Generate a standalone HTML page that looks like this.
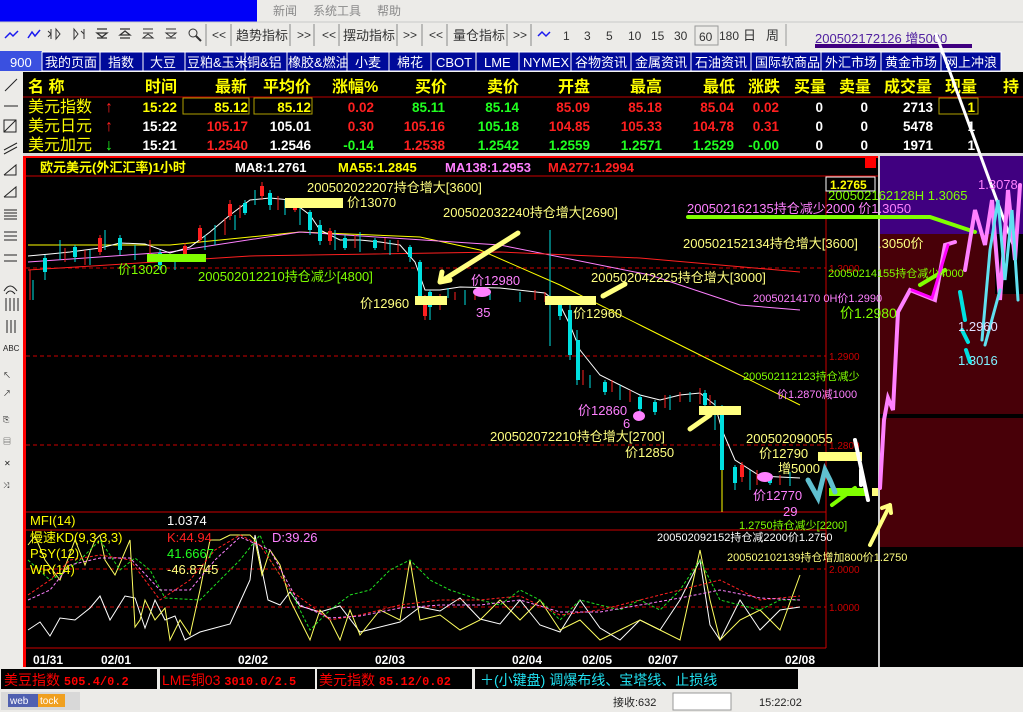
<!DOCTYPE html>
<html><head><meta charset="utf-8"><style>
*{margin:0;padding:0}
body{width:1023px;height:712px;overflow:hidden;background:#ecebe8;font-family:"Liberation Sans","Noto Sans CJK SC",sans-serif}
svg{position:absolute;left:0;top:0}
</style></head><body>
<svg width="1023" height="712" viewBox="0 0 1023 712" font-family="Liberation Sans, Noto Sans CJK SC, sans-serif">
<rect x="0" y="0" width="1023" height="22" fill="#ecebe8"/>
<rect x="0" y="0" width="257" height="22" fill="#0000f8"/>
<g fill="#8a8a8a" font-size="12"><text x="273" y="15">新闻</text><text x="313" y="15">系统工具</text><text x="377" y="15">帮助</text></g>
<line x1="0" y1="22" x2="1023" y2="22" stroke="#c8c8c8"/>
<rect x="0" y="23" width="1023" height="25" fill="#ecebe8"/>
<g stroke="#888" fill="none"><line x1="206" y1="24" x2="206" y2="46"/><line x1="231" y1="24" x2="231" y2="46"/><line x1="290" y1="24" x2="290" y2="46"/><line x1="314" y1="24" x2="314" y2="46"/><line x1="339" y1="24" x2="339" y2="46"/><line x1="397" y1="24" x2="397" y2="46"/><line x1="422" y1="24" x2="422" y2="46"/><line x1="447" y1="24" x2="447" y2="46"/><line x1="507" y1="24" x2="507" y2="46"/><line x1="531" y1="24" x2="531" y2="46"/></g>
<g stroke="#1a1af0" stroke-width="1.5" fill="none"><polyline points="5,38 10,33 13,36 18,31"/><polyline points="28,38 32,32 35,36 40,30"/><polyline points="538,36 542,32 546,36 550,32"/></g>
<g stroke="#333" fill="none"><path d="M51,29V39M51,34l-3,-3M51,34l-3,3M56,29l4,5l-4,5z"/><path d="M74,29l4,5l-4,5zM84,29V39M84,34l-3,-3"/><path d="M97,29h10M97,33h10l-5,4z M97,38h10" stroke-width="1.3"/><path d="M120,29h10M125,31l-5,4h10z M120,38h10" stroke-width="1.3"/><path d="M143,29h10M143,33h10M148,34l-5,4h10z"/><path d="M166,29h10M166,33h10l-5,4zM166,38h10"/><circle cx="193" cy="33" r="4"/><path d="M196,36l5,5" stroke-width="2"/></g>
<g fill="#333" font-size="12">
<text x="212" y="39">&lt;&lt;</text><text x="236" y="40" font-size="13">趋势指标</text><text x="297" y="39">&gt;&gt;</text><text x="322" y="39">&lt;&lt;</text><text x="343" y="40" font-size="13">摆动指标</text><text x="403" y="39">&gt;&gt;</text><text x="429" y="39">&lt;&lt;</text><text x="453" y="40" font-size="13">量仓指标</text><text x="513" y="39">&gt;&gt;</text>
<text x="563" y="40">1</text><text x="584" y="40">3</text><text x="606" y="40">5</text><text x="628" y="40">10</text><text x="651" y="40">15</text><text x="674" y="40">30</text><text x="699" y="41">60</text><text x="719" y="40">180</text><text x="743" y="40" font-size="13">日</text><text x="766" y="40" font-size="13">周</text></g>
<rect x="695" y="26" width="23" height="19" fill="none" stroke="#999"/>
<line x1="786" y1="24" x2="786" y2="46" stroke="#999"/>
<text x="815" y="43" fill="#5020a0" font-size="13">200502172126  增5000</text>
<line x1="815" y1="46" x2="972" y2="46" stroke="#400080" stroke-width="4"/>
<rect x="0" y="49" width="1023" height="23" fill="#ecebe8"/>
<rect x="0" y="51" width="42" height="20" fill="#3a50e0"/>
<text x="10" y="67" fill="#fff" font-size="13">900</text>
<g fill="#000a9a" stroke="#fff" stroke-width="1">
<rect x="42" y="52" width="58" height="19"/><rect x="100" y="52" width="43" height="19"/><rect x="143" y="52" width="42" height="19"/><rect x="185" y="52" width="60" height="19"/><rect x="245" y="52" width="42" height="19"/><rect x="287" y="52" width="60" height="19"/><rect x="347" y="52" width="42" height="19"/><rect x="389" y="52" width="42" height="19"/><rect x="431" y="52" width="45" height="19"/><rect x="476" y="52" width="43" height="19"/><rect x="519" y="52" width="52" height="19"/><rect x="571" y="52" width="60" height="19"/><rect x="631" y="52" width="60" height="19"/><rect x="691" y="52" width="60" height="19"/><rect x="751" y="52" width="70" height="19"/><rect x="821" y="52" width="60" height="19"/><rect x="881" y="52" width="60" height="19"/><rect x="941" y="52" width="60" height="19"/></g>
<g fill="#fff" font-size="13"><text x="45" y="67">我的页面</text><text x="108" y="67">指数</text><text x="150" y="67">大豆</text><text x="187" y="67">豆粕&amp;玉米</text><text x="247" y="67">铜&amp;铝</text><text x="288" y="67">橡胶&amp;燃油</text><text x="355" y="67">小麦</text><text x="397" y="67">棉花</text><text x="436" y="67">CBOT</text><text x="484" y="67">LME</text><text x="523" y="67">NYMEX</text><text x="575" y="67">谷物资讯</text><text x="635" y="67">金属资讯</text><text x="695" y="67">石油资讯</text><text x="755" y="67">国际软商品</text><text x="825" y="67">外汇市场</text><text x="885" y="67">黄金市场</text><text x="945" y="67">网上冲浪</text></g>
<rect x="0" y="72" width="23" height="595" fill="#ecebe8"/>
<g stroke="#222" fill="none" stroke-width="1"><line x1="5" y1="91" x2="17" y2="79"/><line x1="4" y1="106" x2="18" y2="106"/><rect x="4" y="120" width="12" height="12"/><line x1="4" y1="132" x2="16" y2="120"/><line x1="4" y1="150" x2="17" y2="143"/><line x1="4" y1="154" x2="17" y2="147"/>
<polyline points="4,175 16,165 16,175 4,175"/><polyline points="4,197 16,187 16,197 4,197"/>
<line x1="4" y1="210" x2="17" y2="210"/><line x1="4" y1="213" x2="17" y2="213"/><line x1="4" y1="216" x2="17" y2="216"/><line x1="4" y1="219" x2="17" y2="219"/>
<line x1="4" y1="232" x2="17" y2="232"/><line x1="4" y1="236" x2="17" y2="236"/><line x1="4" y1="240" x2="17" y2="240"/><line x1="4" y1="255" x2="17" y2="255"/><line x1="4" y1="261" x2="17" y2="261"/>
<path d="M4,291 Q10,281 17,291"/><path d="M6,294 Q10,288 15,294"/>
<line x1="6" y1="298" x2="6" y2="311"/><line x1="10" y1="298" x2="10" y2="311"/><line x1="14" y1="298" x2="14" y2="311"/><line x1="18" y1="298" x2="18" y2="311"/>
<line x1="7" y1="320" x2="7" y2="333"/><line x1="11" y1="320" x2="11" y2="333"/><line x1="15" y1="320" x2="15" y2="333"/></g>
<g font-size="8" fill="#222"><text x="3" y="351">ABC</text><text x="3" y="378">↖</text><text x="3" y="396">↗</text><text x="3" y="422">⎘</text><text x="3" y="444">▤</text><text x="4" y="466">✕</text><text x="3" y="488">⤨</text></g>
<rect x="23" y="72" width="1000" height="82" fill="#000"/>
<g fill="#ffff00" font-size="16" font-weight="bold"><text x="28" y="92">名 称</text><text x="145" y="92">时间</text><text x="215" y="92">最新</text><text x="263" y="92">平均价</text><text x="332" y="92">涨幅%</text><text x="415" y="92">买价</text><text x="487" y="92">卖价</text><text x="558" y="92">开盘</text><text x="630" y="92">最高</text><text x="703" y="92">最低</text><text x="748" y="92">涨跌</text><text x="794" y="92">买量</text><text x="839" y="92">卖量</text><text x="884" y="92">成交量</text><text x="945" y="92">现量</text><text x="1003" y="92">持</text></g>
<line x1="23" y1="97" x2="1023" y2="97" stroke="#b00" stroke-width="1"/>
<g font-size="16" fill="#ffff00"><text x="28" y="112">美元指数</text><text x="28" y="131">美元日元</text><text x="28" y="150">美元加元</text></g>
<g font-size="16" font-weight="bold"><text x="105" y="112" fill="#ff2020">↑</text><text x="105" y="131" fill="#ff2020">↑</text><text x="105" y="150" fill="#20ff20">↓</text></g>
<rect x="183" y="98" width="66" height="16" fill="none" stroke="#b0a000"/><rect x="254" y="98" width="58" height="16" fill="none" stroke="#b0a000"/><rect x="939" y="98" width="39" height="16" fill="none" stroke="#b0a000"/>
<g font-size="13.5" font-weight="bold" text-anchor="end">
<text x="177" y="112" fill="#ffff00">15:22</text><text x="248" y="112" fill="#ffff00">85.12</text><text x="311" y="112" fill="#ffff00">85.12</text><text x="374" y="112" fill="#ff2020">0.02</text><text x="445" y="112" fill="#20ff20">85.11</text><text x="519" y="112" fill="#20ff20">85.14</text><text x="590" y="112" fill="#ff2020">85.09</text><text x="662" y="112" fill="#ff2020">85.18</text><text x="734" y="112" fill="#ff2020">85.04</text><text x="779" y="112" fill="#ff2020">0.02</text><text x="823" y="112" fill="#fff">0</text><text x="868" y="112" fill="#fff">0</text><text x="933" y="112" fill="#fff">2713</text><text x="975" y="112" fill="#ffff00">1</text>
<text x="177" y="131" fill="#fff">15:22</text><text x="248" y="131" fill="#ff2020">105.17</text><text x="311" y="131" fill="#fff">105.01</text><text x="374" y="131" fill="#ff2020">0.30</text><text x="445" y="131" fill="#ff2020">105.16</text><text x="519" y="131" fill="#20ff20">105.18</text><text x="590" y="131" fill="#ff2020">104.85</text><text x="662" y="131" fill="#ff2020">105.33</text><text x="734" y="131" fill="#ff2020">104.78</text><text x="779" y="131" fill="#ff2020">0.31</text><text x="823" y="131" fill="#fff">0</text><text x="868" y="131" fill="#fff">0</text><text x="933" y="131" fill="#fff">5478</text><text x="975" y="131" fill="#fff">1</text>
<text x="177" y="150" fill="#fff">15:21</text><text x="248" y="150" fill="#ff2020">1.2540</text><text x="311" y="150" fill="#fff">1.2546</text><text x="374" y="150" fill="#20ff20">-0.14</text><text x="445" y="150" fill="#ff2020">1.2538</text><text x="519" y="150" fill="#20ff20">1.2542</text><text x="590" y="150" fill="#20ff20">1.2559</text><text x="662" y="150" fill="#20ff20">1.2571</text><text x="734" y="150" fill="#20ff20">1.2529</text><text x="779" y="150" fill="#20ff20">-0.00</text><text x="823" y="150" fill="#fff">0</text><text x="868" y="150" fill="#fff">0</text><text x="933" y="150" fill="#fff">1971</text><text x="975" y="150" fill="#fff">1</text></g>
<rect x="23" y="153" width="1000" height="3" fill="#d8d8d8"/>
<rect x="23" y="156" width="855" height="511" fill="#000"/>
<rect x="23" y="156" width="3" height="511" fill="#f00"/>
<rect x="26" y="156" width="852" height="2" fill="#f00"/>
<rect x="865" y="158" width="11" height="10" fill="#f00"/>
<g font-size="13" font-weight="bold"><text x="40" y="172" fill="#ffff00">欧元美元(外汇汇率)1小时</text><text x="235" y="172" fill="#fff">MA8:1.2761</text><text x="338" y="172" fill="#ffff00">MA55:1.2845</text><text x="445" y="172" fill="#ff80ff">MA138:1.2953</text><text x="548" y="172" fill="#ff2020">MA277:1.2994</text></g>
<line x1="26" y1="176" x2="878" y2="176" stroke="#c00"/>
<line x1="826" y1="176" x2="826" y2="648" stroke="#c00"/>
<rect x="826" y="177" width="49" height="14" fill="#000" stroke="#fff"/>
<text x="830" y="189" fill="#ffff00" font-size="12" font-weight="bold">1.2765</text>
<g stroke="#c00" stroke-dasharray="4,3"><line x1="26" y1="268" x2="826" y2="268"/><line x1="26" y1="356" x2="826" y2="356"/><line x1="26" y1="445" x2="826" y2="445"/><line x1="26" y1="569" x2="826" y2="569"/><line x1="26" y1="607" x2="826" y2="607"/></g>
<g fill="#c00" font-size="10"><text x="829" y="272">1.3000</text><text x="829" y="360">1.2900</text><text x="829" y="449">1.2800</text><text x="829" y="573">2.0000</text><text x="829" y="611">1.0000</text></g>
<line x1="26" y1="512" x2="826" y2="512" stroke="#c00"/><line x1="26" y1="530" x2="826" y2="530" stroke="#c00"/><line x1="26" y1="648" x2="826" y2="648" stroke="#c00"/>
<polyline fill="none" stroke="#ffff00" points="28,245 170,245 300,232 420,237 480,250 560,285 640,325 720,365 800,405"/>
<polyline fill="none" stroke="#ff80ff" points="28,262 170,252 300,232 500,245 650,275 740,305 800,310"/>
<polyline fill="none" stroke="#ff2020" points="28,270 250,256 500,252 640,258 800,272"/>
<polyline fill="none" stroke="#fff" points="28,256 50,254 70,252 100,248 120,243 145,244 170,253 190,247 210,232 230,215 250,200 270,198 290,200 310,215 320,230 340,240 360,240 380,242 400,245 415,262 425,290 440,290 460,287 500,288 545,293 560,305 570,325 580,350 600,375 620,385 640,395 660,400 680,395 700,393 715,405 722,430 735,460 760,476 800,478"/>
<g stroke="#00e0e0" stroke-width="1">
<path d="M33,280V300M45,255V280M60,240V260M75,245V262M90,250V265M105,230V250M120,235V255M135,245V260M160,250V270M175,255V270M205,235V250M215,225V245M235,215V230M245,200V215M255,190V205M270,190V210M285,200V215M300,205V225M310,210V235M320,220V245M335,230V250M345,235V250M360,232V252M375,238V250M390,240V255M410,245V262M420,260V300M430,290V320M448,288V298M465,290V305M490,290V300M520,292V302M550,230V345M560,296V320M570,305V360M577,330V385M590,375V388M605,380V395M620,385V400M640,395V412M655,400V415M670,395V410M690,392V402M705,390V410M715,400V430M722,405V500M735,465V490M750,470V490M770,475V485M790,472V486"/></g>
<g fill="#00e0e0"><rect x="43" y="258" width="4" height="14"/><rect x="73" y="247" width="4" height="10"/><rect x="118" y="238" width="4" height="12"/><rect x="158" y="253" width="4" height="12"/><rect x="243" y="203" width="4" height="10"/><rect x="268" y="193" width="4" height="12"/><rect x="308" y="212" width="4" height="18"/><rect x="318" y="225" width="4" height="16"/><rect x="343" y="238" width="4" height="10"/><rect x="373" y="240" width="4" height="8"/><rect x="408" y="247" width="4" height="10"/><rect x="418" y="262" width="4" height="35"/><rect x="428" y="292" width="4" height="15"/><rect x="558" y="298" width="4" height="18"/><rect x="568" y="310" width="4" height="45"/><rect x="576" y="340" width="4" height="40"/><rect x="603" y="382" width="4" height="10"/><rect x="638" y="397" width="4" height="12"/><rect x="653" y="402" width="4" height="10"/><rect x="703" y="393" width="4" height="12"/><rect x="720" y="410" width="4" height="60"/><rect x="733" y="467" width="4" height="16"/><rect x="768" y="477" width="4" height="6"/></g>
<g stroke="#ff2020"><path d="M30,270V300M65,248V262M85,250V265M100,235V255M150,240V258M185,243V258M200,225V243M225,218V235M230,200V220M240,205V218M262,182V200M278,196V210M295,200V212M330,228V245M355,235V248M385,238V250M398,240V252M425,295V320M440,294V310M455,292V300M475,292V300M535,290V300M545,292V302M583,370V385M612,380V392M630,390V402M665,395V408M680,392V402M700,388V404M710,395V405M742,462V482M757,470V485M780,475V485"/></g>
<g fill="#ff2020"><rect x="98" y="238" width="4" height="14"/><rect x="183" y="246" width="4" height="8"/><rect x="198" y="228" width="4" height="12"/><rect x="228" y="204" width="4" height="12"/><rect x="260" y="186" width="4" height="10"/><rect x="293" y="202" width="4" height="8"/><rect x="328" y="231" width="4" height="10"/><rect x="423" y="298" width="4" height="18"/><rect x="740" y="465" width="4" height="12"/></g>
<line x1="550" y1="232" x2="550" y2="346" stroke="#00e0e0"/>
<line x1="722" y1="470" x2="722" y2="512" stroke="#ffff00"/>
<g fill="#ffff80"><rect x="285" y="198" width="58" height="10"/><rect x="415" y="296" width="32" height="9"/><rect x="545" y="296" width="51" height="9"/><rect x="699" y="406" width="42" height="9"/><rect x="818" y="452" width="44" height="9"/><rect x="872" y="488" width="30" height="8"/></g>
<g fill="#80ff00"><rect x="147" y="254" width="59" height="8"/><rect x="881" y="371" width="37" height="7"/><rect x="829" y="488" width="37" height="8"/><rect x="892" y="295" width="39" height="8"/></g>
<g fill="#ff80ff"><ellipse cx="482" cy="292" rx="9" ry="5"/><ellipse cx="639" cy="416" rx="6" ry="5"/><ellipse cx="765" cy="477" rx="8" ry="5"/></g>
<rect x="878" y="156" width="145" height="511" fill="#000"/>
<rect x="878" y="156" width="2" height="511" fill="#ccc"/>
<rect x="880" y="156" width="143" height="78" fill="#400080"/>
<rect x="880" y="234" width="143" height="180" fill="#480008"/>
<rect x="995" y="234" width="28" height="60" fill="#000"/>
<rect x="880" y="418" width="143" height="129" fill="#480008"/>
<g stroke-linecap="round" fill="none">
<path d="M518,233 L440,282 M440,282 l2,-10 M440,282 l10,-2" stroke="#ffff80" stroke-width="5"/>
<path d="M603,296 L625,284" stroke="#ffff80" stroke-width="5"/>
<path d="M690,429 L710,415" stroke="#ffff80" stroke-width="5"/>
<path d="M870,545 L890,505 M890,505 l-8,3 M890,505 l1,8" stroke="#ffff80" stroke-width="4"/>
<path d="M832,505 L855,488" stroke="#80ff00" stroke-width="4"/>
<path d="M688,217 L930,217 L975,232" stroke="#80ff00" stroke-width="4"/>
<path d="M920,285 L945,270" stroke="#80ff00" stroke-width="4"/>
<path d="M936,34 L1015,250" stroke="#fff" stroke-width="3"/>
<path d="M855,440 L868,500 M861,470 V485" stroke="#fff" stroke-width="4"/>
<path d="M880,488 L884,420 L888,398 L893,410 L898,312 L910,290 L935,300 L945,245 L955,242" stroke="#ff80ff" stroke-width="4"/>
<path d="M912,290 L932,298 L948,245" stroke="#ff00ff" stroke-width="3"/>
<path d="M965,270 L975,210 L985,245 L992,200 L1000,300 L1008,190 L1015,260 L1020,185" stroke="#ff80ff" stroke-width="4"/>
<path d="M982,340 L990,250 L998,200 L1005,280 L1012,210 L1018,300" stroke="#60e0f0" stroke-width="3"/>
<path d="M1000,290 L985,345" stroke="#60e0f0" stroke-width="3"/>
<path d="M960,292 L965,320 M962,330 L968,342 M966,350 L970,362" stroke="#00e0e0" stroke-width="4"/>
<path d="M808,480 L818,498 L825,470 L830,480 L835,492" stroke="#60c0d0" stroke-width="5"/>
</g>
<g font-size="13">
<text x="307" y="192" fill="#ffff80">200502022207持仓增大[3600]</text>
<text x="347" y="207" fill="#ffff80">价13070</text>
<text x="443" y="217" fill="#ffff80">200502032240持仓增大[2690]</text>
<text x="687" y="213" fill="#ff80ff">200502162135持仓减少2000 价1.3050</text>
<text x="828" y="200" fill="#80ff00">200502162128H 1.3065</text>
<text x="683" y="248" fill="#ffff80">200502152134持仓增大[3600]</text>
<text x="878" y="248" fill="#ffff80">.3050价</text>
<text x="978" y="189" fill="#ff80ff">1.3078</text>
<text x="118" y="274" fill="#80ff00">价13020</text>
<text x="198" y="281" fill="#80ff00">200502012210持仓减少[4800]</text>
<text x="471" y="285" fill="#ff80ff">价12980</text>
<text x="591" y="282" fill="#ffff80">200502042225持仓增大[3000]</text>
<text x="828" y="277" fill="#80ff00" font-size="11">20050214155持仓减少4000</text>
<text x="753" y="302" fill="#ff80ff" font-size="11">20050214170 0H价1.2990</text>
<text x="360" y="308" fill="#ffff80">价12960</text>
<text x="476" y="317" fill="#ff80ff">35</text>
<text x="573" y="318" fill="#ffff80">价12960</text>
<text x="840" y="318" fill="#80ff00" font-size="14">价1.2980</text>
<text x="958" y="331" fill="#e0e0ff">1.2960</text>
<text x="958" y="365" fill="#80f0ff">1.3016</text>
<text x="743" y="380" fill="#80ff00" font-size="11">200502112123持仓减少</text>
<text x="777" y="398" fill="#ff80ff" font-size="11">价1.2870减1000</text>
<text x="578" y="415" fill="#ff80ff">价12860</text>
<text x="623" y="428" fill="#ff80ff">6</text>
<text x="490" y="441" fill="#ffff80">200502072210持仓增大[2700]</text>
<text x="746" y="443" fill="#ffff80">200502090055</text>
<text x="625" y="457" fill="#ffff80">价12850</text>
<text x="759" y="458" fill="#ffff80">价12790</text>
<text x="778" y="473" fill="#ffff80">增5000</text>
<text x="753" y="500" fill="#ff80ff">价12770</text>
<text x="783" y="516" fill="#ff80ff">29</text>
<text x="739" y="529" fill="#80ff00" font-size="11">1.2750持仓减少[2200]</text>
<text x="657" y="541" fill="#fff" font-size="11">200502092152持仓减2200价1.2750</text>
<text x="727" y="561" fill="#ffff80" font-size="11">200502102139持仓增加800价1.2750</text>
</g>
<polyline fill="none" stroke="#fff" points="28,630 40,622 50,636 60,618 75,620 90,608 100,596 110,620 125,596 135,598 145,628 155,600 165,620 175,616 185,640 200,632 230,624 240,602 250,580 255,535 262,570 268,600 280,605 290,592 300,606 320,612 340,606 360,632 400,622 420,607 440,611 460,598 480,619 500,624 520,600 540,625 560,632 580,600 600,628 620,640 640,620 660,630 680,600 700,560 710,625 720,640 740,600 760,630 780,610 800,607"/>
<polyline fill="none" stroke="#ffff60" points="28,545 35,536 45,560 60,580 75,540 85,565 95,540 100,535 105,560 115,575 130,540 135,627 140,620 145,600 155,620 165,608 170,640 180,620 190,635 200,590 210,540 220,540 230,535 250,535 255,540 262,575 270,550 280,565 290,600 300,620 310,640 320,610 330,620 340,640 350,610 360,635 380,610 400,620 410,560 420,620 440,615 460,630 480,620 500,600 520,620 540,600 560,630 580,620 600,640 620,630 640,620 660,630 680,640 700,550 710,600 720,640 740,620 760,610 780,630 800,575"/>
<polyline fill="none" stroke="#20e020" stroke-dasharray="3,2" points="28,560 50,580 60,575 80,560 100,540 120,570 135,558 150,570 165,598 200,600 240,560 260,535 270,560 290,590 310,630 330,610 350,595 370,590 390,570 410,560 430,580 450,590 480,600 500,605 520,590 540,600 560,620 580,600 600,605 620,610 640,600 660,610 680,590 700,560 720,600 740,605 760,610 780,600 800,600"/>
<polyline fill="none" stroke="#ff2020" stroke-dasharray="3,2" points="28,595 50,580 70,560 100,555 130,560 160,600 190,580 215,550 240,535 260,545 290,590 330,620 360,615 400,605 440,600 480,600 520,596 560,615 600,610 640,600 680,590 720,580 760,600 800,596"/>
<polyline fill="none" stroke="#ff80ff" stroke-dasharray="3,2" points="28,600 50,590 70,565 100,558 130,558 160,590 190,590 215,560 240,537 270,550 300,605 330,618 360,616 400,608 440,605 480,605 520,600 560,612 600,612 640,605 680,598 720,590 760,598 800,600"/>
<g font-size="13"><text x="30" y="525" fill="#ffff00">MFI(14)</text><text x="167" y="525" fill="#fff">1.0374</text>
<text x="30" y="542" fill="#ffff00">慢速KD(9,3,3,3)</text><text x="167" y="542" fill="#ff2020">K:44.94</text><text x="272" y="542" fill="#ff80ff">D:39.26</text>
<text x="30" y="558" fill="#ffff00">PSY(12)</text><text x="167" y="558" fill="#20ff20">41.6667</text>
<text x="30" y="574" fill="#ffff00">WR(14)</text><text x="167" y="574" fill="#ffff80">-46.8745</text></g>
<g font-size="12" font-weight="bold" fill="#fff"><text x="33" y="664">01/31</text><text x="101" y="664">02/01</text><text x="238" y="664">02/02</text><text x="375" y="664">02/03</text><text x="512" y="664">02/04</text><text x="582" y="664">02/05</text><text x="648" y="664">02/07</text><text x="785" y="664">02/08</text></g>
<rect x="0" y="667" width="1023" height="23" fill="#ecebe8"/>
<g fill="#000"><rect x="1" y="669" width="156" height="20"/><rect x="160" y="669" width="155" height="20"/><rect x="317" y="669" width="155" height="20"/><rect x="475" y="669" width="323" height="20"/></g>
<g font-size="14"><text x="4" y="685" fill="#f00">美豆指数 <tspan font-family="Liberation Mono,monospace" font-weight="bold" font-size="12">505.4/0.2</tspan></text><text x="162" y="685" fill="#f00">LME铜03 <tspan font-family="Liberation Mono,monospace" font-weight="bold" font-size="12"> 3010.0/2.5</tspan></text><text x="319" y="685" fill="#f00">美元指数 <tspan font-family="Liberation Mono,monospace" font-weight="bold" font-size="12">85.12/0.02</tspan></text><text x="480" y="685" fill="#20e0f0">＋(小键盘)  调爆布线、宝塔线、止损线</text></g>
<rect x="0" y="690" width="1023" height="22" fill="#ecebe8"/>
<rect x="1" y="692" width="79" height="18" fill="#d8d8d8"/>
<rect x="8" y="694" width="30" height="13" fill="#5060b0"/><rect x="38" y="694" width="27" height="13" fill="#f0a020"/>
<text x="10" y="704" fill="#fff" font-size="10">web</text><text x="40" y="704" fill="#fff" font-size="10">tock</text>
<text x="613" y="706" fill="#222" font-size="11">接收:632</text>
<rect x="673" y="693" width="58" height="17" fill="#fff" stroke="#999"/>
<text x="759" y="706" fill="#222" font-size="11">15:22:02</text>
</svg>
</body></html>
